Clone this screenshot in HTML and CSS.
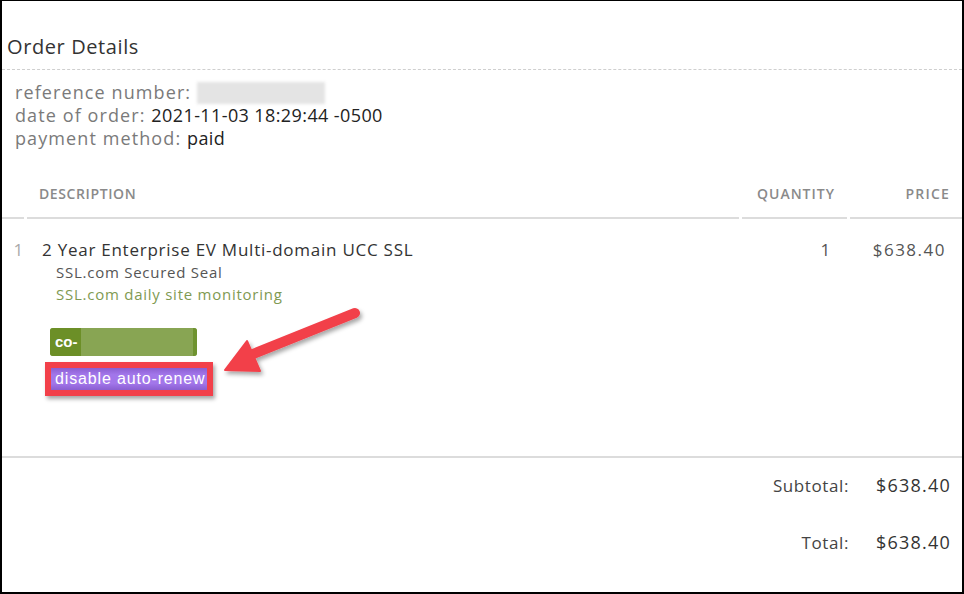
FILE: index.html
```html
<!DOCTYPE html>
<html>
<head>
<meta charset="utf-8">
<link rel="stylesheet" href="styles.css">
</head>
<body>
<div class="frame">
  <h1 class="title">Order Details</h1>
  <div class="meta">
    <div class="meta-line"><span class="lbl">reference number:</span> <span class="blurred"></span></div>
    <div class="meta-line"><span class="lbl">date of order:</span> <span class="val">2021-11-03 18:29:44 -0500</span></div>
    <div class="meta-line"><span class="lbl">payment method:</span> <span class="val">paid</span></div>
  </div>
  <div class="table">
    <div class="th th-idx"></div>
    <div class="th th-desc">DESCRIPTION</div>
    <div class="th th-qty">QUANTITY</div>
    <div class="th th-price">PRICE</div>

    <div class="td td-idx">1</div>
    <div class="td td-desc">
      <div class="prod">2 Year Enterprise EV Multi-domain UCC SSL</div>
      <div class="sub">SSL.com Secured Seal</div>
      <div class="sub green">SSL.com daily site monitoring</div>
      <div class="tag"><span class="tag-text">co-</span><span class="tag-blur"></span><span class="tag-end"></span></div>
      <div class="hl"><span class="btn">disable auto-renew</span></div>
    </div>
    <div class="td td-qty">1</div>
    <div class="td td-price num">$638.40</div>
  </div>
  <div class="totals">
    <div class="t-lbl">Subtotal:</div><div class="t-val">$638.40</div>
    <div class="t-lbl">Total:</div><div class="t-val">$638.40</div>
  </div>
  <svg class="arrow" width="964" height="594" viewBox="0 0 964 594">
    <defs>
      <filter id="sh" x="-20%" y="-20%" width="140%" height="140%">
        <feDropShadow dx="2" dy="3" stdDeviation="2" flood-color="#000" flood-opacity="0.35"/>
      </filter>
    </defs>
    <g filter="url(#sh)" fill="#f2404a" stroke="#f2404a">
      <line x1="355" y1="313" x2="248" y2="356" stroke-width="10" stroke-linecap="round"/>
      <polygon points="225,370 247,341 260,371" stroke-width="2" stroke-linejoin="round"/>
    </g>
  </svg>
</div>
</body>
</html>
```
FILE: styles.css
```css
* { box-sizing: border-box; }
html, body { margin: 0; padding: 0; background: #fff; }
body { font-family: "Open Sans", "DejaVu Sans", sans-serif; }
.frame {
  position: relative;
  width: 964px;
  height: 594px;
  border-left: 2px solid #000;
  border-top: 1px solid #000;
  border-right: 2px solid #000;
  border-bottom: 2px solid #000;
  overflow: hidden;
}
.title {
  margin: 0;
  padding: 34px 0 11px 5px;
  font-size: 20px;
  font-weight: 400;
  color: #333;
  line-height: 23px;
  letter-spacing: 0.6px;
  border-bottom: 1px dashed #cfcfcf;
}
.meta {
  padding: 11px 0 0 13px;
  font-size: 18px;
  line-height: 23px;
  letter-spacing: 1.1px;
}
.lbl { color: #7a7a7a; }
.val { color: #222; letter-spacing: 0.4px; }
.blurred {
  display: inline-block;
  width: 128px;
  height: 22px;
  vertical-align: -5px;
  background: #e4e4e4;
  filter: blur(1.5px);
}
.table {
  display: grid;
  grid-template-columns: 22px 712px 105px 112px;
  column-gap: 3px;
  margin-top: 35px;
}
.th {
  font-size: 14px;
  font-weight: 600;
  color: #8a8a8a;
  letter-spacing: 0.6px;
  line-height: 18px;
  padding-bottom: 14px;
  border-bottom: 2px solid #dcdcdc;
}
.th-desc { padding-left: 12px; }
.th-qty { text-align: right; padding-right: 12px; letter-spacing: 1px; }
.th-price { text-align: right; padding-right: 12px; letter-spacing: 1.2px; }
.td {
  padding-top: 20px;
  font-size: 17px;
  line-height: 22px;
  color: #555;
  letter-spacing: 0.75px;
}
.td-idx { color: #aaa; text-align: right; padding-right: 0; }
.td-desc { padding-left: 15px; height: 237px; }
.td-qty { text-align: right; padding-right: 16px; }
.td-price { text-align: right; padding-right: 16px; }
.num { letter-spacing: 1.5px; }
.prod { color: #333; font-weight: 500; }
.sub { font-size: 15px; line-height: 22px; padding-left: 14px; color: #555; letter-spacing: 0.75px; }
.sub.green { color: #7f9a52; }
.tag {
  display: flex;
  width: 147px;
  height: 28px;
  margin: 23px 0 0 8px;
  border-radius: 3px;
  overflow: hidden;
  background: #88a553;
}
.tag-text {
  background: #6c8f27;
  color: #fff;
  font-family: "Liberation Sans", Arial, sans-serif;
  font-weight: 700;
  font-size: 15px;
  line-height: 28px;
  padding-left: 5px;
  width: 31px;
  letter-spacing: 0;
}
.tag-blur { flex: 1; }
.tag-end { width: 4px; background: #6f9330; }
.hl {
  display: inline-block;
  margin: 6px 0 0 3px;
  border: 6px solid #f2404a;
  box-shadow: 2px 3px 4px rgba(0,0,0,0.35);
}
.btn {
  display: block;
  background: linear-gradient(#8a5ed0, #a276ea 30%, #a276ea 70%, #8a5ed0);
  color: #fff;
  font-family: "Liberation Sans", Arial, sans-serif;
  font-size: 16px;
  line-height: 22px;
  padding: 0 0 0 4px;
  width: 156px;
  letter-spacing: 0.85px;
  white-space: nowrap;
  overflow: hidden;
}
.totals {
  border-top: 2px solid #dcdcdc;
  display: grid;
  grid-template-columns: 847px 1fr;
  column-gap: 27px;
  row-gap: 34px;
  padding-top: 16px;
  align-items: baseline;
}
.t-lbl { text-align: right; font-size: 17px; color: #444; letter-spacing: 0.6px; line-height: 22px; }
.t-val { font-size: 18px; color: #333; font-weight: 500; letter-spacing: 1.2px; line-height: 22px; }
.arrow { position: absolute; left: -2px; top: -1px; pointer-events: none; }
```
